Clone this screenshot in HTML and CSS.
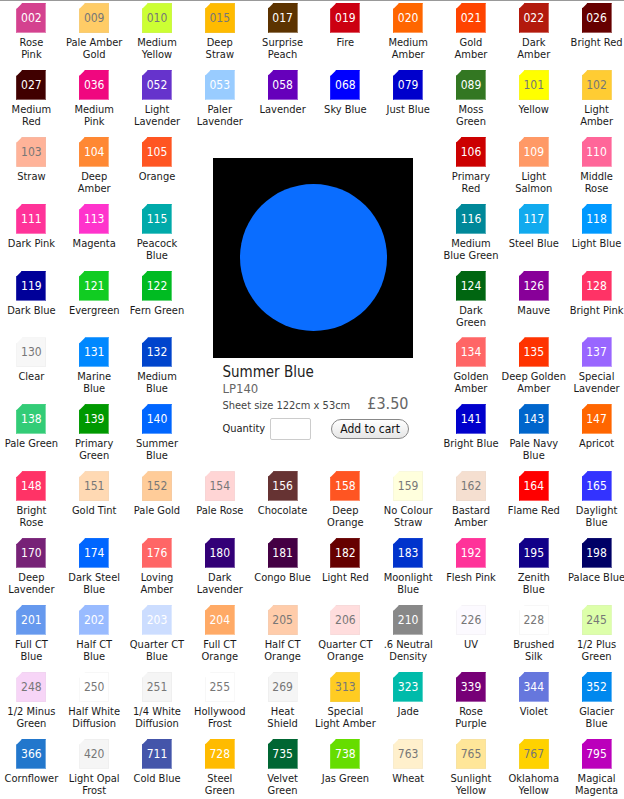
FILE: index.html
```html
<!DOCTYPE html>
<html>
<head>
<meta charset="utf-8">
<link rel="stylesheet" href="styles.css">
</head>
<body>
<div class="page">
<div class="grid">
<div class="item"><div class="sw" style="--c:#d4428f">002</div><div class="lbl">Rose<br>Pink</div></div>
<div class="item"><div class="sw lt" style="--c:#ffcc66">009</div><div class="lbl">Pale Amber<br>Gold</div></div>
<div class="item"><div class="sw lt" style="--c:#ccff33">010</div><div class="lbl">Medium<br>Yellow</div></div>
<div class="item"><div class="sw lt" style="--c:#ffbb00">015</div><div class="lbl">Deep<br>Straw</div></div>
<div class="item"><div class="sw" style="--c:#5c3300">017</div><div class="lbl">Surprise<br>Peach</div></div>
<div class="item"><div class="sw" style="--c:#cc0011">019</div><div class="lbl">Fire</div></div>
<div class="item"><div class="sw" style="--c:#ff6600">020</div><div class="lbl">Medium<br>Amber</div></div>
<div class="item"><div class="sw" style="--c:#ff4400">021</div><div class="lbl">Gold<br>Amber</div></div>
<div class="item"><div class="sw" style="--c:#b31a0d">022</div><div class="lbl">Dark<br>Amber</div></div>
<div class="item"><div class="sw" style="--c:#660000">026</div><div class="lbl">Bright Red</div></div>

<div class="item"><div class="sw" style="--c:#400000">027</div><div class="lbl">Medium<br>Red</div></div>
<div class="item"><div class="sw" style="--c:#f0077f">036</div><div class="lbl">Medium<br>Pink</div></div>
<div class="item"><div class="sw" style="--c:#6633cc">052</div><div class="lbl">Light<br>Lavender</div></div>
<div class="item"><div class="sw" style="--c:#99ccff">053</div><div class="lbl">Paler<br>Lavender</div></div>
<div class="item"><div class="sw" style="--c:#6600bb">058</div><div class="lbl">Lavender</div></div>
<div class="item"><div class="sw" style="--c:#0000ff">068</div><div class="lbl">Sky Blue</div></div>
<div class="item"><div class="sw" style="--c:#0000cc">079</div><div class="lbl">Just Blue</div></div>
<div class="item"><div class="sw" style="--c:#337722">089</div><div class="lbl">Moss<br>Green</div></div>
<div class="item"><div class="sw lt" style="--c:#ffff00">101</div><div class="lbl">Yellow</div></div>
<div class="item"><div class="sw lt" style="--c:#ffcc33">102</div><div class="lbl">Light<br>Amber</div></div>

<div class="item"><div class="sw lt" style="--c:#ffb399">103</div><div class="lbl">Straw</div></div>
<div class="item"><div class="sw" style="--c:#ff8833">104</div><div class="lbl">Deep<br>Amber</div></div>
<div class="item"><div class="sw" style="--c:#ff5522">105</div><div class="lbl">Orange</div></div>

<div class="panel">
  <div class="preview"><div class="disc"></div></div>
  <div class="info">
    <div class="pname">Summer Blue</div>
    <div class="pcode">LP140</div>
    <div class="prow">
      <span class="psize">Sheet size 122cm x 53cm</span>
      <span class="price">£3.50</span>
    </div>
    <div class="qrow">
      <span class="qlbl">Quantity</span>
      <span class="qbox"></span>
      <span class="cart">Add to cart</span>
    </div>
  </div>
</div>

<div class="item"><div class="sw" style="--c:#cc0000">106</div><div class="lbl">Primary<br>Red</div></div>
<div class="item"><div class="sw" style="--c:#ff9966">109</div><div class="lbl">Light<br>Salmon</div></div>
<div class="item"><div class="sw" style="--c:#ff6699">110</div><div class="lbl">Middle<br>Rose</div></div>

<div class="item"><div class="sw" style="--c:#ff3399">111</div><div class="lbl">Dark Pink</div></div>
<div class="item"><div class="sw" style="--c:#ff33cc">113</div><div class="lbl">Magenta</div></div>
<div class="item"><div class="sw" style="--c:#00aaaa">115</div><div class="lbl">Peacock<br>Blue</div></div>
<div class="item"><div class="sw" style="--c:#008899">116</div><div class="lbl">Medium<br>Blue Green</div></div>
<div class="item"><div class="sw" style="--c:#11aaee">117</div><div class="lbl">Steel Blue</div></div>
<div class="item"><div class="sw" style="--c:#0099ff">118</div><div class="lbl">Light Blue</div></div>

<div class="item"><div class="sw" style="--c:#000099">119</div><div class="lbl">Dark Blue</div></div>
<div class="item"><div class="sw" style="--c:#11cc22">121</div><div class="lbl">Evergreen</div></div>
<div class="item"><div class="sw" style="--c:#00bb22">122</div><div class="lbl">Fern Green</div></div>
<div class="item"><div class="sw" style="--c:#006611">124</div><div class="lbl">Dark<br>Green</div></div>
<div class="item"><div class="sw" style="--c:#880099">126</div><div class="lbl">Mauve</div></div>
<div class="item"><div class="sw" style="--c:#ff3366">128</div><div class="lbl">Bright Pink</div></div>

<div class="item"><div class="sw lt" style="--c:#f7f7f7">130</div><div class="lbl">Clear</div></div>
<div class="item"><div class="sw" style="--c:#0088ff">131</div><div class="lbl">Marine<br>Blue</div></div>
<div class="item"><div class="sw" style="--c:#0044cc">132</div><div class="lbl">Medium<br>Blue</div></div>
<div class="item"><div class="sw" style="--c:#ff6666">134</div><div class="lbl">Golden<br>Amber</div></div>
<div class="item"><div class="sw" style="--c:#ff3300">135</div><div class="lbl">Deep Golden<br>Amber</div></div>
<div class="item"><div class="sw" style="--c:#9966ff">137</div><div class="lbl">Special<br>Lavender</div></div>

<div class="item"><div class="sw" style="--c:#33cc77">138</div><div class="lbl">Pale Green</div></div>
<div class="item"><div class="sw" style="--c:#009900">139</div><div class="lbl">Primary<br>Green</div></div>
<div class="item"><div class="sw" style="--c:#0066ff">140</div><div class="lbl">Summer<br>Blue</div></div>
<div class="item"><div class="sw" style="--c:#0000cc">141</div><div class="lbl">Bright Blue</div></div>
<div class="item"><div class="sw" style="--c:#0066cc">143</div><div class="lbl">Pale Navy<br>Blue</div></div>
<div class="item"><div class="sw" style="--c:#ff6600">147</div><div class="lbl">Apricot</div></div>

<div class="item"><div class="sw" style="--c:#ff3366">148</div><div class="lbl">Bright<br>Rose</div></div>
<div class="item"><div class="sw lt" style="--c:#ffd9b3">151</div><div class="lbl">Gold Tint</div></div>
<div class="item"><div class="sw lt" style="--c:#ffcc99">152</div><div class="lbl">Pale Gold</div></div>
<div class="item"><div class="sw lt" style="--c:#ffd5d5">154</div><div class="lbl">Pale Rose</div></div>
<div class="item"><div class="sw" style="--c:#663333">156</div><div class="lbl">Chocolate</div></div>
<div class="item"><div class="sw" style="--c:#ff5522">158</div><div class="lbl">Deep<br>Orange</div></div>
<div class="item"><div class="sw lt" style="--c:#ffffdd">159</div><div class="lbl">No Colour<br>Straw</div></div>
<div class="item"><div class="sw lt" style="--c:#f5dfd0">162</div><div class="lbl">Bastard<br>Amber</div></div>
<div class="item"><div class="sw" style="--c:#ff0000">164</div><div class="lbl">Flame Red</div></div>
<div class="item"><div class="sw" style="--c:#3333ff">165</div><div class="lbl">Daylight<br>Blue</div></div>

<div class="item"><div class="sw" style="--c:#772277">170</div><div class="lbl">Deep<br>Lavender</div></div>
<div class="item"><div class="sw" style="--c:#0066ff">174</div><div class="lbl">Dark Steel<br>Blue</div></div>
<div class="item"><div class="sw" style="--c:#ff6666">176</div><div class="lbl">Loving<br>Amber</div></div>
<div class="item"><div class="sw" style="--c:#330077">180</div><div class="lbl">Dark<br>Lavender</div></div>
<div class="item"><div class="sw" style="--c:#440044">181</div><div class="lbl">Congo Blue</div></div>
<div class="item"><div class="sw" style="--c:#660000">182</div><div class="lbl">Light Red</div></div>
<div class="item"><div class="sw" style="--c:#0033cc">183</div><div class="lbl">Moonlight<br>Blue</div></div>
<div class="item"><div class="sw" style="--c:#ff3399">192</div><div class="lbl">Flesh Pink</div></div>
<div class="item"><div class="sw" style="--c:#110088">195</div><div class="lbl">Zenith<br>Blue</div></div>
<div class="item"><div class="sw" style="--c:#000066">198</div><div class="lbl">Palace Blue</div></div>

<div class="item"><div class="sw" style="--c:#6699ee">201</div><div class="lbl">Full CT<br>Blue</div></div>
<div class="item"><div class="sw" style="--c:#99bbff">202</div><div class="lbl">Half CT<br>Blue</div></div>
<div class="item"><div class="sw" style="--c:#ccddff">203</div><div class="lbl">Quarter CT<br>Blue</div></div>
<div class="item"><div class="sw" style="--c:#ffaa66">204</div><div class="lbl">Full CT<br>Orange</div></div>
<div class="item"><div class="sw lt" style="--c:#ffccaa">205</div><div class="lbl">Half CT<br>Orange</div></div>
<div class="item"><div class="sw lt" style="--c:#ffdddd">206</div><div class="lbl">Quarter CT<br>Orange</div></div>
<div class="item"><div class="sw" style="--c:#888888">210</div><div class="lbl">.6 Neutral<br>Density</div></div>
<div class="item"><div class="sw lt" style="--c:#fcfaff">226</div><div class="lbl">UV</div></div>
<div class="item"><div class="sw lt" style="--c:#ffffff">228</div><div class="lbl">Brushed<br>Silk</div></div>
<div class="item"><div class="sw lt" style="--c:#ddffaa">245</div><div class="lbl">1/2 Plus<br>Green</div></div>

<div class="item"><div class="sw lt" style="--c:#f7d5f7">248</div><div class="lbl">1/2 Minus<br>Green</div></div>
<div class="item"><div class="sw lt" style="--c:#ffffff">250</div><div class="lbl">Half White<br>Diffusion</div></div>
<div class="item"><div class="sw lt" style="--c:#f5f5f5">251</div><div class="lbl">1/4 White<br>Diffusion</div></div>
<div class="item"><div class="sw lt" style="--c:#ffffff">255</div><div class="lbl">Hollywood<br>Frost</div></div>
<div class="item"><div class="sw lt" style="--c:#f5f5f5">269</div><div class="lbl">Heat<br>Shield</div></div>
<div class="item"><div class="sw lt" style="--c:#ffcc22">313</div><div class="lbl">Special<br>Light Amber</div></div>
<div class="item"><div class="sw" style="--c:#00bbaa">323</div><div class="lbl">Jade</div></div>
<div class="item"><div class="sw" style="--c:#770077">339</div><div class="lbl">Rose<br>Purple</div></div>
<div class="item"><div class="sw" style="--c:#6677dd">344</div><div class="lbl">Violet</div></div>
<div class="item"><div class="sw" style="--c:#0088ee">352</div><div class="lbl">Glacier<br>Blue</div></div>

<div class="item"><div class="sw" style="--c:#2277cc">366</div><div class="lbl">Cornflower</div></div>
<div class="item"><div class="sw lt" style="--c:#f5f5f5">420</div><div class="lbl">Light Opal<br>Frost</div></div>
<div class="item"><div class="sw" style="--c:#4455aa">711</div><div class="lbl">Cold Blue</div></div>
<div class="item"><div class="sw" style="--c:#ffbb00">728</div><div class="lbl">Steel<br>Green</div></div>
<div class="item"><div class="sw" style="--c:#006633">735</div><div class="lbl">Velvet<br>Green</div></div>
<div class="item"><div class="sw" style="--c:#66dd00">738</div><div class="lbl">Jas Green</div></div>
<div class="item"><div class="sw lt" style="--c:#fff0cc">763</div><div class="lbl">Wheat</div></div>
<div class="item"><div class="sw lt" style="--c:#ffe699">765</div><div class="lbl">Sunlight<br>Yellow</div></div>
<div class="item"><div class="sw lt" style="--c:#ffd200">767</div><div class="lbl">Oklahoma<br>Yellow</div></div>
<div class="item"><div class="sw" style="--c:#bb00bb">795</div><div class="lbl">Magical<br>Magenta</div></div>
</div>
</div>
</body>
</html>
```
FILE: styles.css
```css
html, body {
  margin: 0;
  padding: 0;
  background: #fff;
  overflow: hidden;
}
.page {
  width: 640px;
  border-top: 1px solid #999;
  font-family: "DejaVu Sans Condensed", "DejaVu Sans", sans-serif;
  color: #222;
}
.grid {
  display: grid;
  grid-template-columns: repeat(10, 62.8px);
  grid-auto-rows: 66.9px;
}
.item {
  display: flex;
  flex-direction: column;
  align-items: center;
  padding-top: 2px;
}
.sw {
  box-sizing: border-box;
  width: 30px;
  height: 30px;
  background: var(--c);
  border: 1px solid color-mix(in srgb, var(--c) 65%, #fff);
  border-top-color: var(--c);
  border-left-color: var(--c);
  clip-path: polygon(6px 0, 100% 0, 100% 100%, 0 100%, 0 6px);
  color: #fff;
  font-size: 12px;
  line-height: 28px;
  text-align: center;
}
.sw.lt {
  color: #777;
  border-color: color-mix(in srgb, var(--c) 85%, #ccc);
}
.lbl {
  margin-top: 4px;
  font-size: 11px;
  line-height: 12px;
  text-align: center;
  white-space: nowrap;
  color: #1a1a1a;
}
.panel {
  grid-column: 4 / 8;
  grid-row: 3 / 8;
  padding: 23px 0 0 25px;
}
.preview {
  width: 200px;
  height: 200px;
  background: #000;
  display: flex;
  align-items: center;
  justify-content: center;
}
.disc {
  width: 147px;
  height: 147px;
  border-radius: 50%;
  background: #0a6dff;
}
.info {
  padding-left: 9px;
}
.pname {
  margin-top: 5px;
  font-size: 15px;
  line-height: 18px;
  color: #222;
}
.pcode {
  font-size: 13px;
  line-height: 16px;
  color: #666;
}
.prow {
  display: flex;
  align-items: baseline;
  gap: 17px;
  line-height: 15px;
  margin-top: -1px;
}
.psize {
  font-size: 11px;
  color: #444;
}
.price {
  font-size: 16px;
  color: #666;
}
.qrow {
  display: flex;
  align-items: center;
  margin-top: 5px;
}
.qlbl {
  font-size: 11px;
  color: #222;
}
.qbox {
  box-sizing: border-box;
  width: 41px;
  height: 22px;
  margin-left: 5px;
  border: 1px solid #ccc;
  border-radius: 2px;
  background: #fff;
}
.cart {
  box-sizing: border-box;
  margin-left: 20px;
  width: 78px;
  height: 20px;
  border: 1px solid #888;
  border-radius: 10px;
  background: linear-gradient(#fff, #e6e6e6);
  font-size: 12px;
  line-height: 18px;
  text-align: center;
  color: #111;
}
```
